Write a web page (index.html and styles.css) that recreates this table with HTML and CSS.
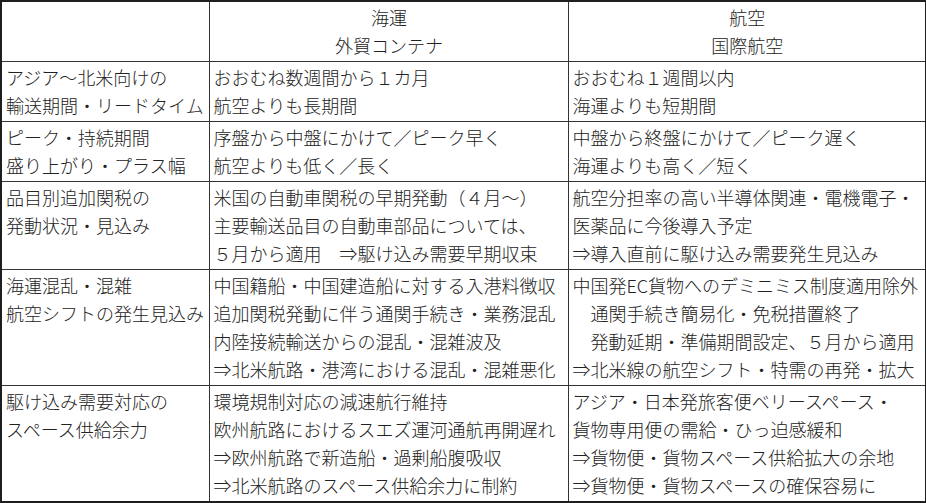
FILE: index.html
```html
<!DOCTYPE html>
<html lang="ja">
<head>
<meta charset="utf-8">
<title>海運・航空 比較</title>
<link rel="stylesheet" href="styles.css">
</head>
<body>
<table class="cmp">
  <colgroup>
    <col class="c1">
    <col class="c2">
    <col class="c3">
  </colgroup>
  <tr class="head">
    <th></th>
    <th>海運<br>外貿コンテナ</th>
    <th>航空<br>国際航空</th>
  </tr>
  <tr>
    <td>アジア～北米向けの<br>輸送期間・リードタイム</td>
    <td>おおむね数週間から１カ月<br>航空よりも長期間</td>
    <td>おおむね１週間以内<br>海運よりも短期間</td>
  </tr>
  <tr>
    <td>ピーク・持続期間<br>盛り上がり・プラス幅</td>
    <td>序盤から中盤にかけて／ピーク早く<br>航空よりも低く／長く</td>
    <td>中盤から終盤にかけて／ピーク遅く<br>海運よりも高く／短く</td>
  </tr>
  <tr>
    <td>品目別追加関税の<br>発動状況・見込み</td>
    <td>米国の自動車関税の早期発動（４月～）<br>主要輸送品目の自動車部品については、<br>５月から適用　⇒駆け込み需要早期収束</td>
    <td>航空分担率の高い半導体関連・電機電子・<br>医薬品に今後導入予定<br>⇒導入直前に駆け込み需要発生見込み</td>
  </tr>
  <tr>
    <td>海運混乱・混雑<br>航空シフトの発生見込み</td>
    <td>中国籍船・中国建造船に対する入港料徴収<br>追加関税発動に伴う通関手続き・業務混乱<br>内陸接続輸送からの混乱・混雑波及<br>⇒北米航路・港湾における混乱・混雑悪化</td>
    <td>中国発EC貨物へのデミニミス制度適用除外<br>　通関手続き簡易化・免税措置終了<br>　発動延期・準備期間設定、５月から適用<br>⇒北米線の航空シフト・特需の再発・拡大</td>
  </tr>
  <tr>
    <td>駆け込み需要対応の<br>スペース供給余力</td>
    <td>環境規制対応の減速航行維持<br>欧州航路におけるスエズ運河通航再開遅れ<br>⇒欧州航路で新造船・過剰船腹吸収<br>⇒北米航路のスペース供給余力に制約</td>
    <td>アジア・日本発旅客便ベリースペース・<br>貨物専用便の需給・ひっ迫感緩和<br>⇒貨物便・貨物スペース供給拡大の余地<br>⇒貨物便・貨物スペースの確保容易に</td>
  </tr>
</table>
</body>
</html>
```
FILE: styles.css
```css
html, body {
  margin: 0;
  padding: 0;
  background: #fff;
}
.cmp {
  width: 925px;
  border-collapse: collapse;
  table-layout: fixed;
  border: 2px solid #1e1e1e;
  font-family: "Noto Sans CJK JP", "Noto Sans", sans-serif;
  font-size: 18px;
  font-weight: 300;
  line-height: 28px;
  color: #222;
}
.c1 { width: 208px; }
.c2 { width: 359px; }
.c3 { width: 358px; }
.cmp th,
.cmp td {
  border: 1px solid #333;
  padding: 1px 3px 2px 4px;
  vertical-align: top;
  text-align: left;
  font-weight: 300;
  white-space: nowrap;
  overflow: hidden;
}
.cmp th {
  text-align: center;
}
```
